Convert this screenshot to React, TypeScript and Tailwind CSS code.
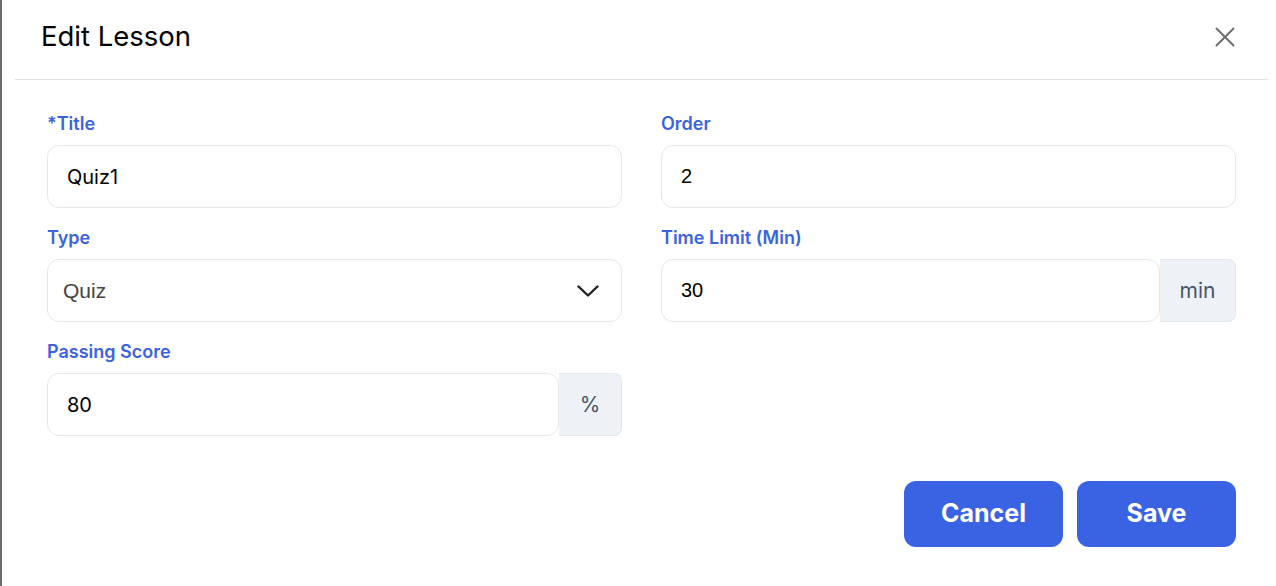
import { X } from 'lucide-react';

const labelClass = 'block pt-[2px] text-[18px] leading-[22px] font-semibold text-[#3b63e0] mb-[10px]';
const inputClass =
  'h-[63px] w-full rounded-[12px] border border-[#e5e7eb] bg-white px-[19px] text-[20px] text-black outline-none';

function AddonInput({ value, unit, unitWidth, valueFont }: { value: string; unit: string; unitWidth: string; valueFont: string }) {
  return (
    <div className="flex h-[63px]">
      <input readOnly value={value} className={`${inputClass} flex-1 ${valueFont}`} />
      <div
        className={`${unitWidth} flex items-center justify-center rounded-r-[8px] border border-l-0 border-[#e2e8f0] bg-[#eef2f6] text-[21px] text-[#475569] font-['Inter',sans-serif]`}
      >
        {unit}
      </div>
    </div>
  );
}

export default function App() {
  return (
    <div className="flex h-[586px] w-[1276px] bg-white font-['Inter',sans-serif]">
      <div className="w-[2px] bg-[#6b6b70]" />
      <div className="flex flex-1 flex-col">
        {/* Header */}
        <div className="ml-[13px] mr-[8px] flex h-[80px] items-center justify-between border-b border-[#e3e3e3] pl-[26px] pr-[26px]">
          <h2 className="pb-[6px] text-[27.5px] font-normal text-black">Edit Lesson</h2>
          <button className="pb-[6px] text-[#6e6e6e]">
            <X size={34} strokeWidth={1.4} />
          </button>
        </div>

        {/* Form */}
        <div className="ml-[45px] mr-[40px] mt-[31px] grid grid-cols-2 gap-x-[39px] gap-y-[17px]">
          <div>
            <label className={labelClass}>*Title</label>
            <input readOnly value="Quiz1" className={`${inputClass} font-['Inter',sans-serif]`} />
          </div>
          <div>
            <label className={labelClass}>Order</label>
            <input readOnly value="2" className={`${inputClass} font-['Liberation_Sans',sans-serif]`} />
          </div>
          <div>
            <label className={labelClass}>Type</label>
            <div className="flex h-[63px] items-center justify-between rounded-[12px] border border-[#e5e7eb] bg-white pl-[15px] pr-[22px]">
              <span className="text-[21px] text-[#444] font-['Liberation_Sans',sans-serif]">Quiz</span>
              <svg width="22" height="12" viewBox="0 0 22 12" fill="none" stroke="#222" strokeWidth="2.4" strokeLinecap="round" strokeLinejoin="round">
                <path d="M1.5 1.5 11 10.5 20.5 1.5" />
              </svg>
            </div>
          </div>
          <div>
            <label className={labelClass}>Time Limit (Min)</label>
            <AddonInput value="30" unit="min" unitWidth="w-[76px]" valueFont="font-['Liberation_Sans',sans-serif]" />
          </div>
          <div>
            <label className={labelClass}>Passing Score</label>
            <AddonInput value="80" unit="%" unitWidth="w-[63px]" valueFont="font-['Inter',sans-serif]" />
          </div>
        </div>

        {/* Actions */}
        <div className="mr-[40px] mt-[45px] flex justify-end gap-[14px]">
          <button className="h-[66px] w-[159px] rounded-[12px] bg-[#3a63e3] text-[25px] font-bold text-white">
            Cancel
          </button>
          <button className="h-[66px] w-[159px] rounded-[12px] bg-[#3a63e3] text-[25px] font-bold text-white">
            Save
          </button>
        </div>
      </div>
    </div>
  );
}
